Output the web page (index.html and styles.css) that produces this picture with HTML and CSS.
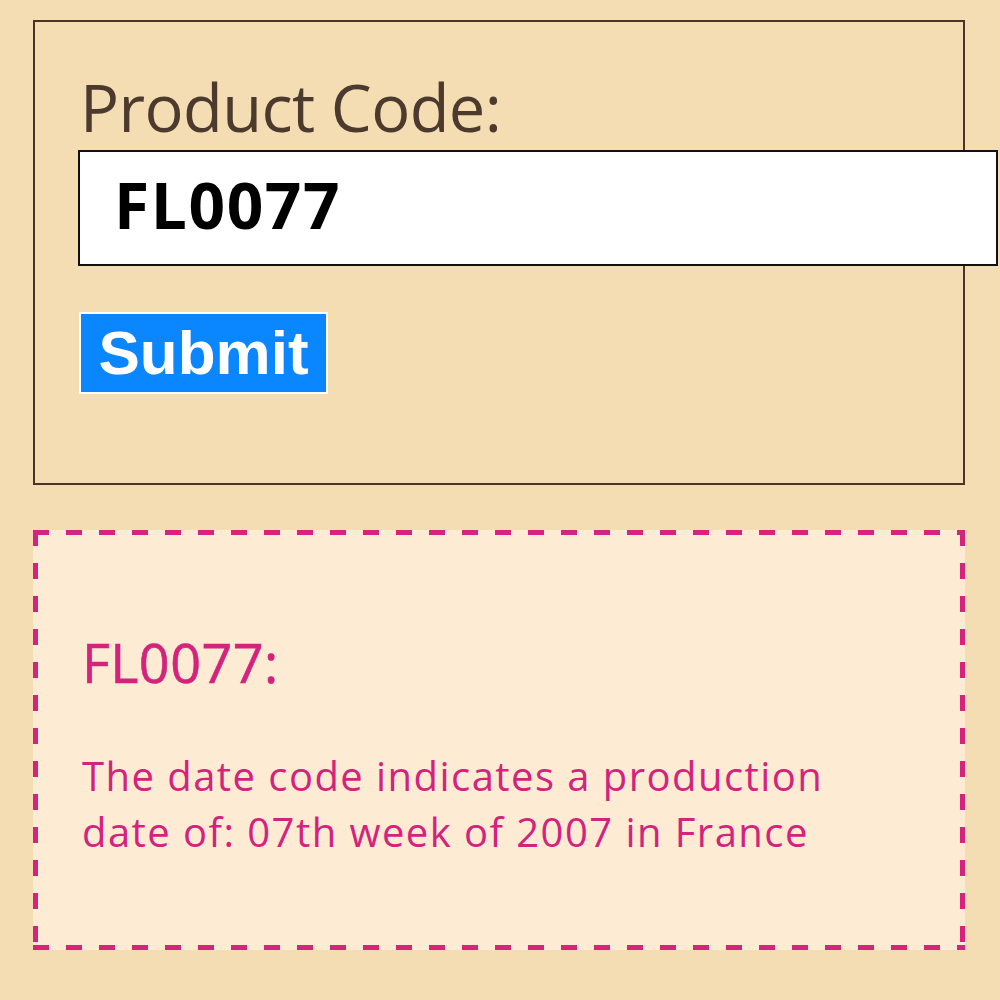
FILE: index.html
```html
<!DOCTYPE html>
<html>
<head>
<meta charset="utf-8">
<link rel="stylesheet" href="styles.css">
</head>
<body>
<div class="page">
  <form class="form-box">
    <label class="label" for="code">Product Code:</label>
    <input class="code-input" id="code" type="text" value="FL0077">
    <button class="submit" type="button">Submit</button>
  </form>
  <div class="result">
    <h2 class="result-title">FL0077:</h2>
    <p class="result-text">The date code indicates a production date of: 07th week of 2007 in France</p>
  </div>
</div>
</body>
</html>
```
FILE: styles.css
```css
html, body {
  margin: 0;
  padding: 0;
  background: #f4ddb2;
}
.page {
  padding: 20px 35px 0 33px;
  font-family: "Open Sans", "Noto Sans", sans-serif;
}
.form-box {
  box-sizing: border-box;
  width: 932px;
  height: 465px;
  border: 2px solid #4a3426;
  padding: 53px 0 0 45px;
  display: flex;
  flex-direction: column;
  align-items: flex-start;
  margin: 0;
}
.label {
  font-size: 65px;
  line-height: 65px;
  color: #4c3a2e;
  letter-spacing: -0.6px;
  display: block;
}
.code-input {
  box-sizing: border-box;
  margin: 10px 0 0 -2px;
  width: 920px;
  height: 116px;
  border: 2px solid #111;
  background: #fff;
  padding: 0 0 8px 34px;
  font-family: "Open Sans", "Noto Sans", sans-serif;
  font-weight: 700;
  font-size: 64px;
  letter-spacing: 1.6px;
  color: #000;
  outline: none;
}
.submit {
  margin: 46px 0 0 -1px;
  box-sizing: border-box;
  width: 249px;
  height: 82px;
  background: #0a86ff;
  border: 2px solid #fff;
  color: #fff;
  font-family: "Liberation Sans", Arial, sans-serif;
  font-weight: 700;
  font-size: 62px;
  line-height: 1;
  padding: 0;
}
.result {
  box-sizing: border-box;
  margin-top: 45px;
  width: 932px;
  height: 420px;
  background-color: #fdebd3;
  background-image:
    repeating-linear-gradient(90deg, #d6237e 0 16px, transparent 16px 33px),
    repeating-linear-gradient(90deg, #d6237e 0 16px, transparent 16px 33px),
    repeating-linear-gradient(180deg, #d6237e 0 16px, transparent 16px 33px),
    repeating-linear-gradient(180deg, #d6237e 0 16px, transparent 16px 33px);
  background-size: 100% 5px, 100% 5px, 5px 100%, 5px 100%;
  background-position: left top, left bottom, left top, right top;
  background-repeat: no-repeat;
  padding: 105px 0 0 49px;
  color: #d4237d;
}
.result-title {
  margin: 0;
  font-size: 54px;
  font-weight: 400;
  line-height: 54px;
  letter-spacing: 0.4px;
  -webkit-text-stroke: 0.6px #d4237d;
}
.result-text {
  margin: 59px 0 0;
  font-size: 40px;
  line-height: 56px;
  letter-spacing: 1.45px;
  max-width: 780px;
}
```
